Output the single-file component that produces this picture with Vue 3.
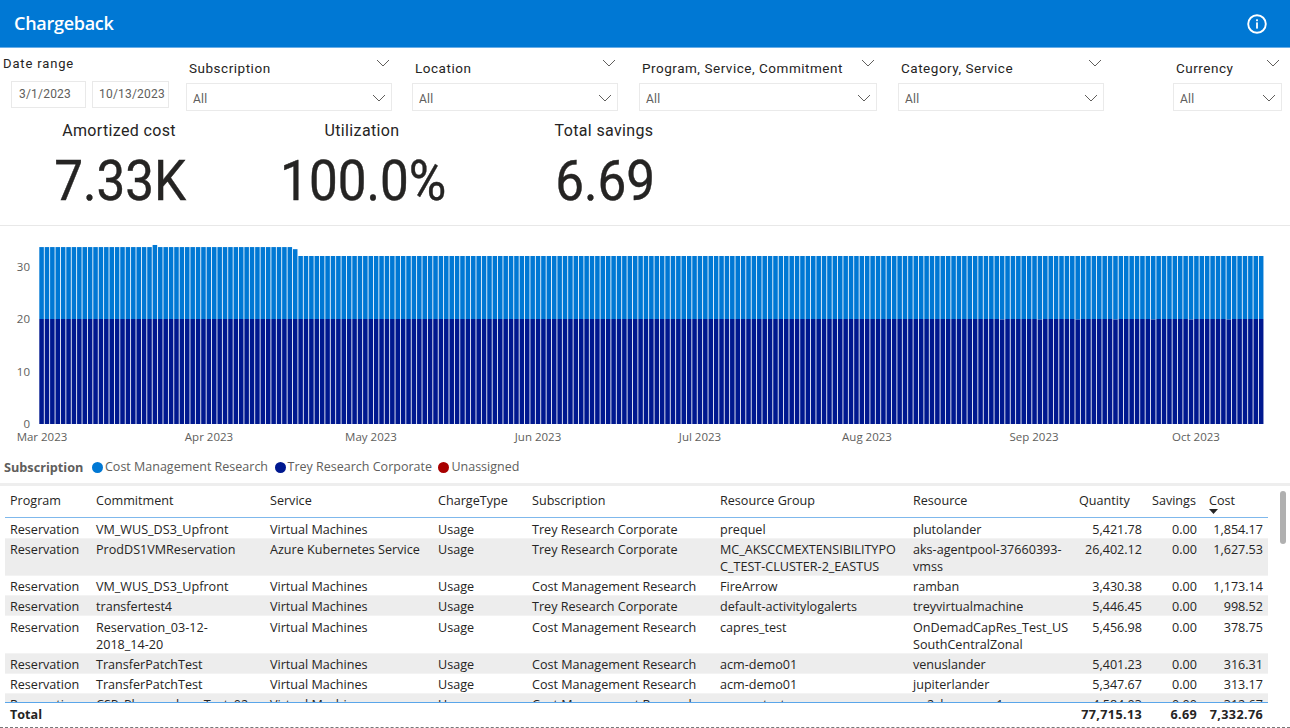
<script setup>
const slicers = [
  { label: 'Subscription', width: 206, gap: 20 },
  { label: 'Location', width: 206, gap: 21 },
  { label: 'Program, Service, Commitment', width: 238, gap: 21 },
  { label: 'Category, Service', width: 206, gap: 69 },
  { label: 'Currency', width: 109, gap: 0 },
]
const kpis = [
  { label: 'Amortized cost', value: '7.33K', width: 238 },
  { label: 'Utilization', value: '100.0%', width: 248 },
  { label: 'Total savings', value: '6.69', width: 236 },
]
const pitch = 1225 / 227
const bars = Array.from({ length: 227 }, (_, i) => {
  let total = i < 47 ? 33.7 : 32
  if (i === 21) total = 34.1
  if (i === 47) total = 33.3
  const base = i > 175 && i % 7 === 3 ? 19.9 : 20
  return {
    x: 39.3 + i * pitch,
    top: 424 - total * 5.25 - 226,
    mid: 424 - base * 5.25 - 226,
  }
})
const yTicks = [
  { y: 424, t: '0' },
  { y: 371.5, t: '10' },
  { y: 319, t: '20' },
  { y: 266.5, t: '30' },
]
const xTicks = [
  { x: 42, t: 'Mar 2023' },
  { x: 209, t: 'Apr 2023' },
  { x: 371, t: 'May 2023' },
  { x: 538, t: 'Jun 2023' },
  { x: 700, t: 'Jul 2023' },
  { x: 867, t: 'Aug 2023' },
  { x: 1034, t: 'Sep 2023' },
  { x: 1196, t: 'Oct 2023' },
]
const legend = [
  { color: '#0078d4', t: 'Cost Management Research' },
  { color: '#00188f', t: 'Trey Research Corporate' },
  { color: '#a80000', t: 'Unassigned' },
]
const headers = ['Program', 'Commitment', 'Service', 'ChargeType', 'Subscription', 'Resource Group', 'Resource', 'Quantity', 'Savings', 'Cost']
const rows = [
  { h: 20, c: ['Reservation', 'VM_WUS_DS3_Upfront', 'Virtual Machines', 'Usage', 'Trey Research Corporate', 'prequel', 'plutolander', '5,421.78', '0.00', '1,854.17'] },
  { h: 37, c: ['Reservation', 'ProdDS1VMReservation', 'Azure Kubernetes Service', 'Usage', 'Trey Research Corporate', 'MC_AKSCCMEXTENSIBILITYPO\nC_TEST-CLUSTER-2_EASTUS', 'aks-agentpool-37660393-\nvmss', '26,402.12', '0.00', '1,627.53'] },
  { h: 20, c: ['Reservation', 'VM_WUS_DS3_Upfront', 'Virtual Machines', 'Usage', 'Cost Management Research', 'FireArrow', 'ramban', '3,430.38', '0.00', '1,173.14'] },
  { h: 20, c: ['Reservation', 'transfertest4', 'Virtual Machines', 'Usage', 'Trey Research Corporate', 'default-activitylogalerts', 'treyvirtualmachine', '5,446.45', '0.00', '998.52'] },
  { h: 38, tall: true, c: ['Reservation', 'Reservation_03-12-\n2018_14-20', 'Virtual Machines', 'Usage', 'Cost Management Research', 'capres_test', 'OnDemadCapRes_Test_US\nSouthCentralZonal', '5,456.98', '0.00', '378.75'] },
  { h: 20, c: ['Reservation', 'TransferPatchTest', 'Virtual Machines', 'Usage', 'Cost Management Research', 'acm-demo01', 'venuslander', '5,401.23', '0.00', '316.31'] },
  { h: 20, c: ['Reservation', 'TransferPatchTest', 'Virtual Machines', 'Usage', 'Cost Management Research', 'acm-demo01', 'jupiterlander', '5,347.67', '0.00', '313.17'] },
  { h: 20, c: ['Reservation', 'CSP_PlanpurchaseTest_02', 'Virtual Machines', 'Usage', 'Cost Management Research', 'capres-test', 'ea2skymerger1', '4,584.03', '0.00', '312.67'] },
]
const totals = ['Total', '', '', '', '', '', '', '77,715.13', '6.69', '7,332.76']
</script>

<template>
  <div class="page">
    <header class="topbar">
      <h1>Chargeback</h1>
      <svg class="info" width="22" height="22" viewBox="0 0 22 22">
        <circle cx="11" cy="11" r="8.8" fill="none" stroke="#fff" stroke-width="1.9" />
        <rect x="10.1" y="9.4" width="1.8" height="6.2" fill="#fff" />
        <rect x="10.1" y="6.3" width="1.8" height="1.9" fill="#fff" />
      </svg>
    </header>

    <section class="filters">
      <div class="dates">
        <div class="dates-label">Date range</div>
        <div class="dates-boxes">
          <div class="date">3/1/2023</div>
          <div class="date">10/13/2023</div>
        </div>
      </div>
      <div
        v-for="s in slicers"
        :key="s.label"
        class="slicer"
        :style="{ width: s.width + 'px', marginRight: s.gap + 'px' }"
      >
        <div class="slicer-head">
          <span>{{ s.label }}</span>
          <svg width="14" height="8" viewBox="0 0 14 8"><path d="M1 1l6 6 6-6" fill="none" stroke="#605e5c" stroke-width="1" /></svg>
        </div>
        <div class="slicer-box">
          <span>All</span>
          <svg width="14" height="8" viewBox="0 0 14 8"><path d="M1 1l6 6 6-6" fill="none" stroke="#605e5c" stroke-width="1" /></svg>
        </div>
      </div>
    </section>

    <section class="kpis">
      <div v-for="k in kpis" :key="k.label" class="kpi" :style="{ width: k.width + 'px' }">
        <div class="kpi-label">{{ k.label }}</div>
        <div class="kpi-value">{{ k.value }}</div>
      </div>
    </section>

    <section class="chart">
      <svg width="1290" height="230" viewBox="0 0 1290 230">
        <g v-for="(b, i) in bars" :key="i">
          <rect :x="b.x" :y="b.top" :width="pitch - 0.85" :height="b.mid - b.top" fill="#0078d4" />
          <rect :x="b.x" :y="b.mid" :width="pitch - 0.85" :height="198 - b.mid" fill="#00188f" />
        </g>
        <text v-for="t in yTicks" :key="t.t" class="axis" x="30" :y="t.y - 226 + 4" text-anchor="end">{{ t.t }}</text>
        <text v-for="t in xTicks" :key="t.t" class="axis" :x="t.x" y="215" text-anchor="middle">{{ t.t }}</text>
      </svg>
    </section>

    <section class="legend">
      <strong>Subscription</strong>
      <span v-for="l in legend" :key="l.t" class="legend-item">
        <i :style="{ background: l.color }"></i>{{ l.t }}
      </span>
    </section>

    <section class="table-wrap">
      <div class="scrollbar"></div>
      <div class="row head">
        <div v-for="(h, i) in headers" :key="h" class="cell" :class="{ cost: i === 9 }">
          {{ h }}
          <svg v-if="i === 9" class="sort" width="9" height="5" viewBox="0 0 9 5"><path d="M0 0h9L4.5 5z" fill="#252423" /></svg>
        </div>
      </div>
      <div class="body">
        <div
          v-for="(r, ri) in rows"
          :key="ri"
          class="row"
          :class="{ alt: ri % 2 === 1, tall: r.tall }"
          :style="{ height: r.h + 'px' }"
        >
          <div v-for="(c, ci) in r.c" :key="ci" class="cell" :class="{ num: ci >= 7 }">{{ c }}</div>
        </div>
      </div>
      <div class="row total">
        <div v-for="(c, ci) in totals" :key="ci" class="cell" :class="{ num: ci >= 7 }">{{ c }}</div>
      </div>
    </section>
    <div class="dashed"></div>
  </div>
</template>

<style>
html, body { margin: 0; padding: 0; background: #fff; overflow: hidden; }
</style>

<style scoped>
.page {
  width: 1290px;
  height: 728px;
  overflow: hidden;
  background: #fff;
  font-family: "Open Sans", "Noto Sans", sans-serif;
  color: #252423;
}
.topbar {
  height: 47px;
  background: #0078d4;
  border-top: 1px solid #0068b8;
  margin-top: -1px;
  border-bottom: 1px solid #69aee8;
  display: flex;
  align-items: center;
  justify-content: space-between;
  padding: 0 22px 0 14px;
}
.topbar h1 {
  margin: 0 0 2px;
  font-size: 18px;
  font-weight: 600;
  color: #fff;
  letter-spacing: -0.28px;
}
.info { display: block; }

.filters {
  display: flex;
  height: 68px;
  padding-left: 3px;
  font-family: Roboto, sans-serif;
}
.dates { width: 183px; flex: none; }
.dates-label {
  font-size: 13px;
  line-height: 16px;
  margin-top: 8px;
  letter-spacing: 0.85px;
  color: #252423;
}
.dates-boxes {
  display: flex;
  gap: 6px;
  margin-top: 9px;
  margin-left: 8px;
}
.date {
  height: 27px;
  box-sizing: border-box;
  border: 1px solid #e9e9e9;
  font-size: 12px;
  line-height: 25px;
  padding-left: 7px;
  color: #605e5c;
  letter-spacing: 0.2px;
}
.date:first-child { width: 75px; }
.date:last-child { width: 77px; padding-left: 6px; }
.slicer { flex: none; }
.slicer-head {
  height: 35px;
  box-sizing: border-box;
  padding: 12px 3px 0 3px;
  display: flex;
  justify-content: space-between;
  font-size: 13.5px;
  line-height: 16px;
  letter-spacing: 0.52px;
  color: #252423;
}
.slicer-head svg { margin-top: -1px; margin-right: -1px; }
.slicer-box {
  height: 28px;
  box-sizing: border-box;
  border: 1px solid #eaeaea;
  display: flex;
  justify-content: space-between;
  align-items: center;
  padding: 4px 5px 0 6px;
  font-size: 12px;
  color: #605e5c;
  letter-spacing: 0.2px;
}
.slicer-box svg { margin-top: -2px; }

.kpis {
  display: flex;
  height: 110px;
  padding-top: 5px;
  box-sizing: border-box;
  border-bottom: 1px solid #e8e8e8;
  font-family: Roboto, sans-serif;
}
.kpi { text-align: center; flex: none; }
.kpi-label {
  font-size: 16px;
  line-height: 20px;
  letter-spacing: 0.35px;
  color: #252423;
}
.kpi-value {
  font-size: 56px;
  font-weight: 400;
  line-height: 66px;
  margin-top: 7px;
  color: #252423;
  transform: translateX(1.2px) scaleX(0.915);
  -webkit-text-stroke: 0.4px #252423;
}

.chart { height: 230px; }
.chart svg { display: block; }
.axis {
  font-family: "Open Sans", sans-serif;
  font-size: 11.5px;
  fill: #605e5c;
}

.legend {
  height: 30px;
  box-sizing: border-box;
  border-bottom: 3px solid #eeeeee;
  display: flex;
  align-items: flex-start;
  padding-left: 4px;
  padding-top: 1px;
  font-size: 12.5px;
  line-height: 20px;
  color: #605e5c;
}
.legend strong { font-weight: 700; font-size: 12.7px; width: 88px; flex: none; }
.legend-item {
  display: inline-flex;
  align-items: center;
  margin-right: 6.5px;
  height: 20px;
}
.legend-item i {
  width: 11px;
  height: 11px;
  border-radius: 50%;
  margin-right: 2px;
  flex: none;
}

.table-wrap {
  position: relative;
  height: 241px;
  padding-left: 5px;
  font-size: 12.6px;
  overflow: hidden;
}
.scrollbar {
  position: absolute;
  left: 1280px;
  top: 5px;
  width: 6px;
  height: 53px;
  border-radius: 3px;
  background: #b0b0b0;
}
.row {
  width: 1263px;
  display: grid;
  grid-template-columns: 86px 174px 168px 94px 188px 193px 165px 74px 55px 66px;
  box-sizing: border-box;
}
.cell {
  padding: 0 5px;
  line-height: 17px;
  white-space: pre-line;
  min-width: 0;
}
.num { text-align: right; white-space: nowrap; }
.head {
  height: 32px;
  padding-top: 6px;
  border-bottom: 1px solid #7fb8ec;
  margin-bottom: 1px;
}
.head .cell:nth-child(8) { padding-left: 6px; }
.cost { position: relative; }
.head .cost { padding-left: 7px; }
.sort { position: absolute; left: 7px; top: 17px; }
.body {
  height: 183px;
  overflow: hidden;
}
.body .row {
  padding-top: 2px;
  border-bottom: 1px solid #f3f3f3;
}
.body .row.tall { padding-top: 3px; }
.alt { background: #ededed; }
.total {
  height: 25px;
  border-top: 1px solid #5aa6ea;
  padding-top: 3px;
  font-weight: 700;
}
.total .num { letter-spacing: 0.35px; }
.dashed {
  border-top: 1px dashed #777;
}
</style>
